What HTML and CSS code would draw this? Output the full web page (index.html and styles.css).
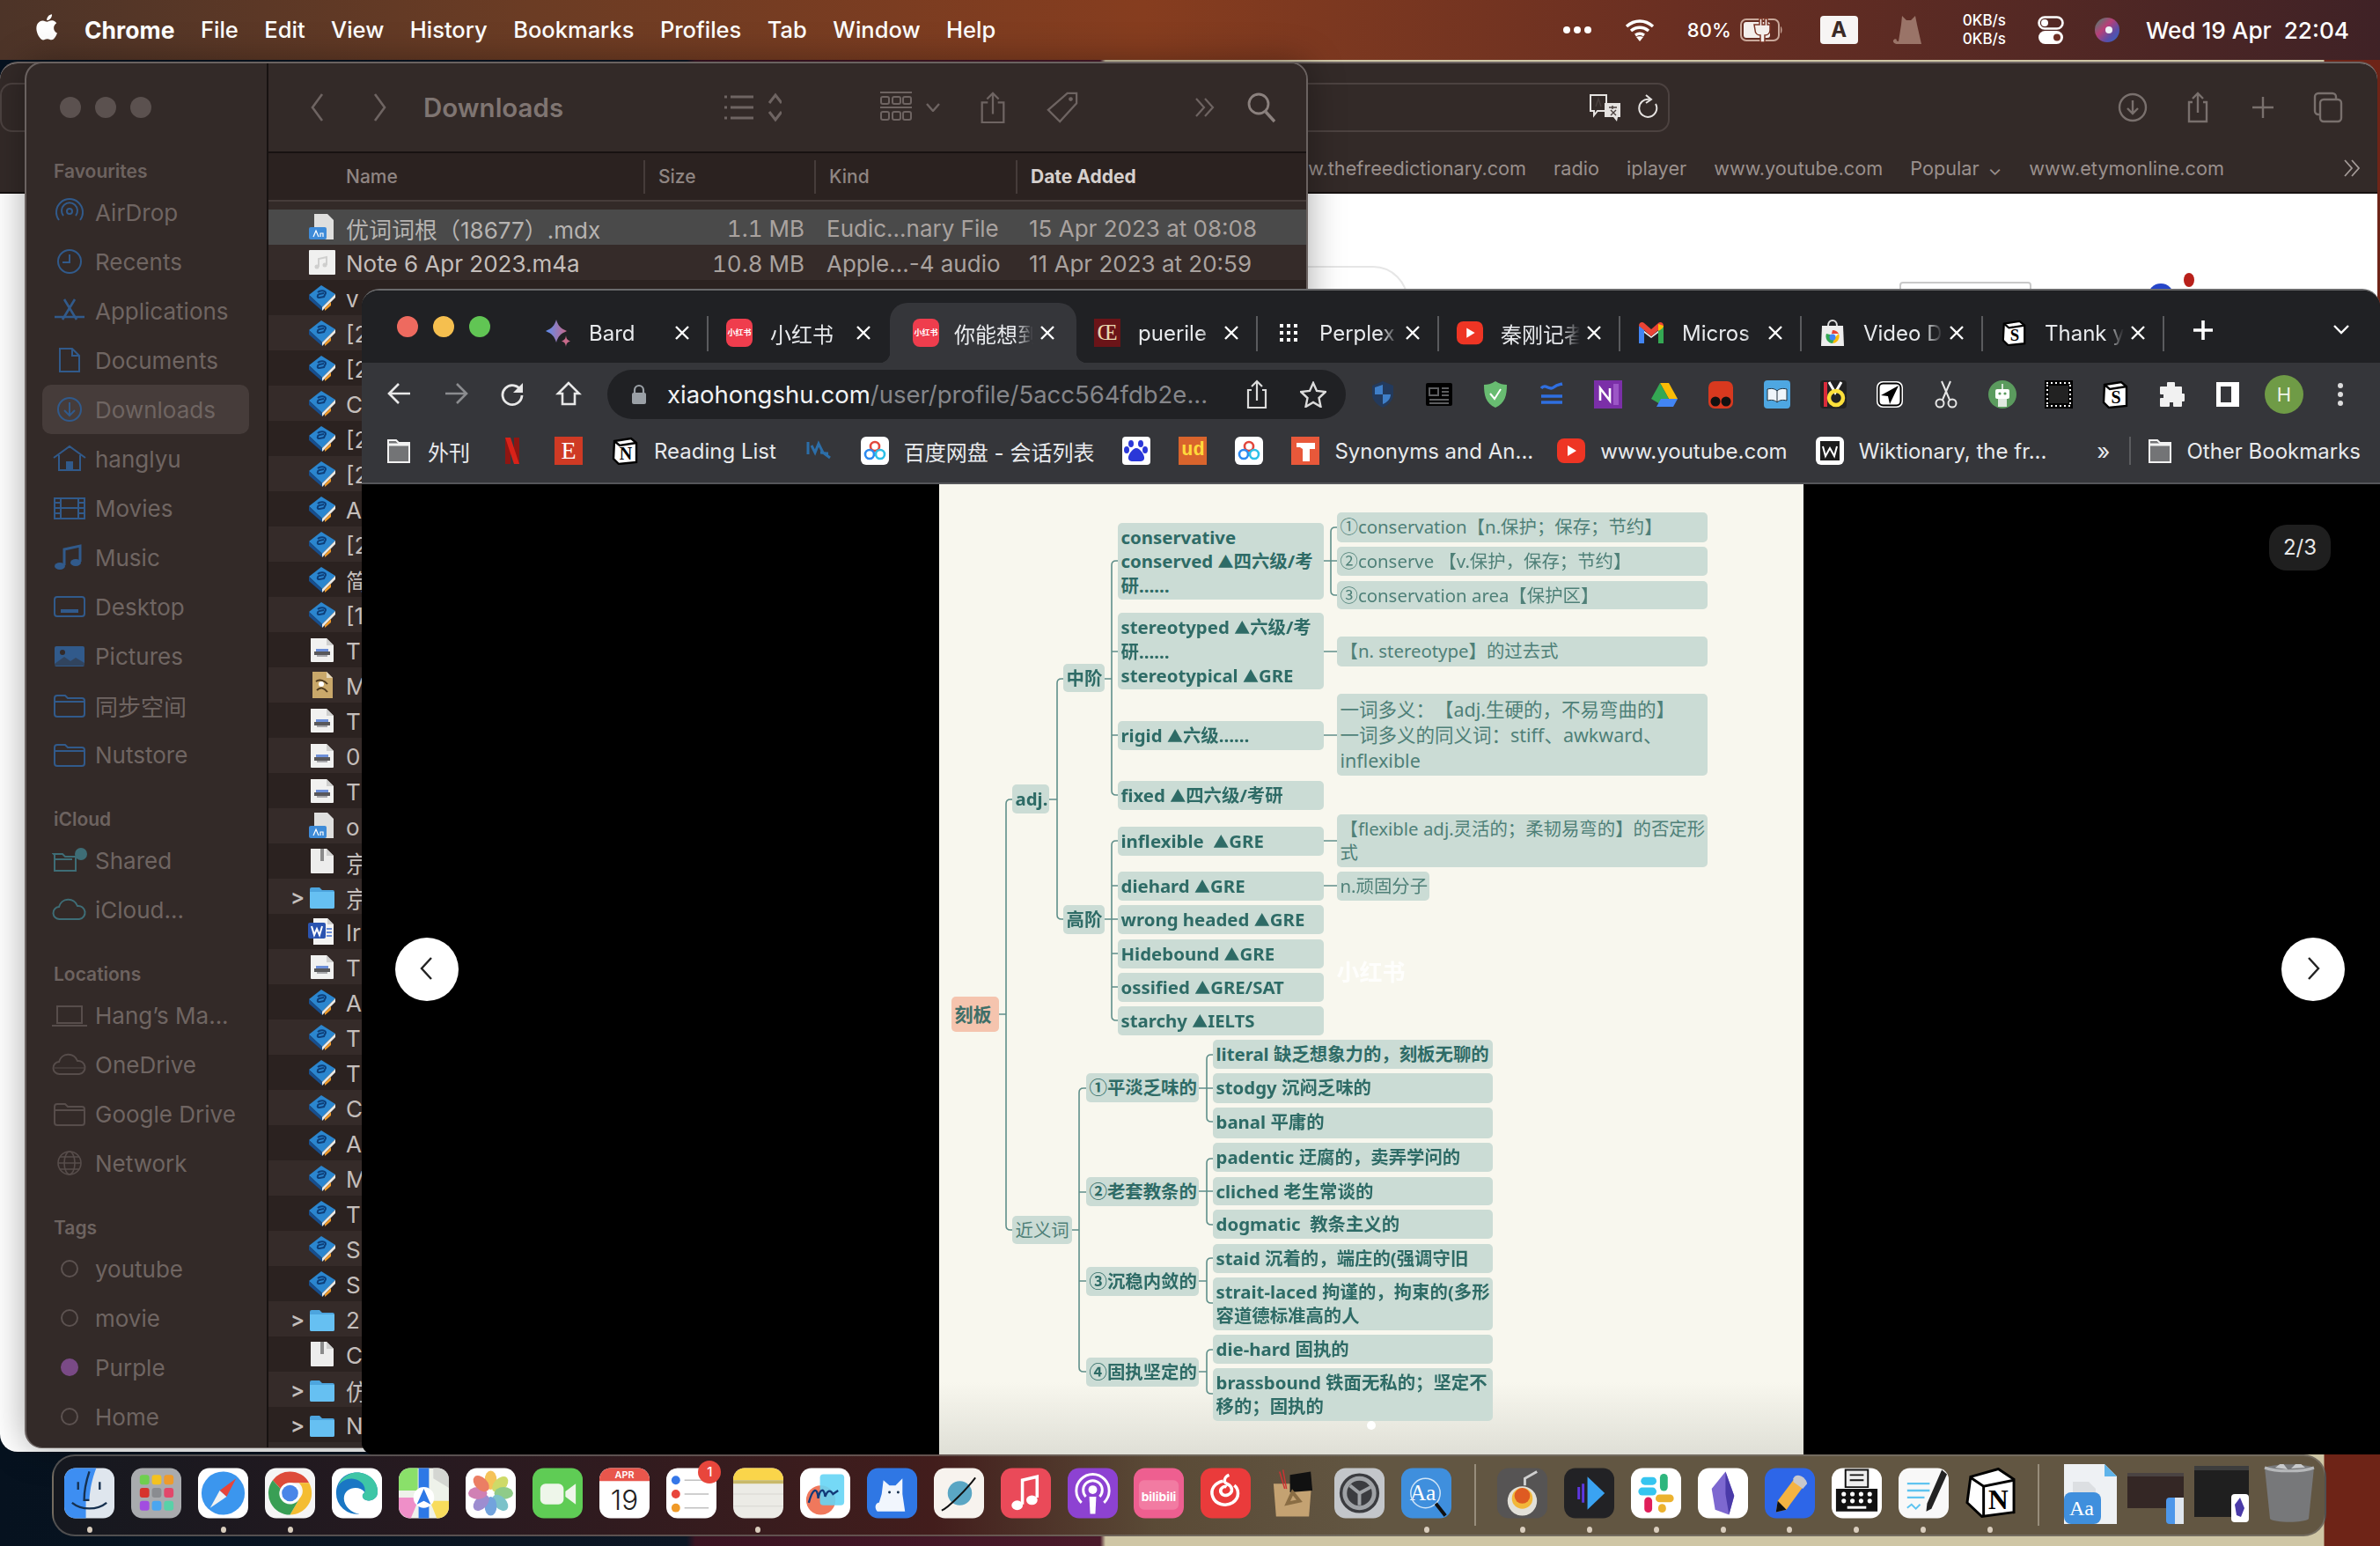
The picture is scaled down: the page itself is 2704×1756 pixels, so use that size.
FILE: index.html
```html
<!DOCTYPE html>
<html lang="en">
<head>
    <meta charset="UTF-8">
    <title>Desktop</title>
    <link rel="stylesheet" href="styles.css">
</head>
<body>
<svg class="defs" width="0" height="0">
    <symbol id="i-book" viewBox="0 0 32 32">
        <path d="M1 13 15 2l16 10-15 15z" fill="#2b86cf"/>
        <path d="M1 13l15 14v4L1 18z" fill="#174f8f"/>
        <path d="M16 27l15-15v4L16 31z" fill="#e9e9e6"/>
        <path d="M19 28l7-7v4l-7 6z" fill="#ef9a2a"/>
        <path d="M11 10c3-3 9-2 9 1l-2 4-5 1c-3 0-3-3 0-4l5-1" fill="none" stroke="#0d3f7a" stroke-width="2"/>
    </symbol>
    <symbol id="i-doc" viewBox="0 0 32 32">
        <path d="M3 3h18l8 8v18a1 1 0 0 1-1 1H4a1 1 0 0 1-1-1z" fill="#f1f1f0"/>
        <path d="M21 3l8 8h-8z" fill="#cfcfce"/>
        <path d="M9 15h14v3H9z" fill="#6d8fd8"/><path d="M7 18h18v4H7z" fill="#59585a"/><path d="M10 22h12v2H10z" fill="#a8a8ab"/>
    </symbol>
    <symbol id="i-zip" viewBox="0 0 32 32">
        <path d="M3 2h18l8 8v19a1 1 0 0 1-1 1H4a1 1 0 0 1-1-1z" fill="#ededec"/>
        <path d="M21 2l8 8h-8z" fill="#cfcfce"/>
        <path d="M14 2h4v14h-4z" fill="#8b8b8b"/>
    </symbol>
    <symbol id="i-audio" viewBox="0 0 32 32">
        <rect x="1" y="2" width="30" height="28" rx="1" fill="#f0f0ef"/>
        <path d="M12 21v-9l9-2v9" fill="none" stroke="#cfcfce" stroke-width="2"/><circle cx="10" cy="21" r="2.500" fill="#cfcfce"/><circle cx="19" cy="19" r="2.500" fill="#cfcfce"/>
    </symbol>
    <symbol id="i-scroll" viewBox="0 0 32 32">
        <path d="M5 1h16l7 7v23H5z" fill="#c9a86a"/><path d="M21 1l7 7h-7z" fill="#e6d9bd"/>
        <path d="M9 12c4-3 10-1 13 3M10 22c4-4 8-3 12 2" fill="none" stroke="#4e3a1e" stroke-width="2"/><circle cx="15" cy="15" r="3" fill="#fff"/>
    </symbol>
    <symbol id="i-word" viewBox="0 0 32 32">
        <path d="M6 1h16l7 7v23H6z" fill="#f4f4f3"/><path d="M22 1l7 7h-7z" fill="#cfcfce"/>
        <rect y="6" width="20" height="18" rx="2" fill="#2b54b0"/><path d="M4 10l3 10 3-7 3 7 3-10" fill="none" stroke="#fff" stroke-width="2"/>
        <path d="M21 13h6M21 17h6M21 21h6" stroke="#3b6bd0" stroke-width="1.500"/>
    </symbol>
    <symbol id="i-dict" viewBox="0 0 32 32">
        <path d="M7 1h15l7 7v22H7z" fill="#dfdfde"/>
        <rect x="1" y="16" width="20" height="14" rx="2" fill="#3e8bd8"/>
        <path d="M6 27l3-7 3 7M14 27v-4h3v4" fill="none" stroke="#fff" stroke-width="1.2"/>
    </symbol>
    <symbol id="i-folder" viewBox="0 0 32 32">
        <path d="M2 8a2 2 0 0 1 2-2h9l3 3h12a2 2 0 0 1 2 2v17a2 2 0 0 1-2 2H4a2 2 0 0 1-2-2z" fill="#4da5de"/>
        <path d="M2 11h28v17a2 2 0 0 1-2 2H4a2 2 0 0 1-2-2z" fill="#66c0f2"/>
    </symbol>
    <symbol id="i-x" viewBox="0 0 20 20">
        <path d="M3 3l14 14M17 3L3 17" fill="none" stroke="#fff" stroke-width="2.4"/>
    </symbol>
    <symbol id="i-bmfolder" viewBox="0 0 26 30">
        <path d="M1 3h9l3 3h12v22H1z" fill="#737476" stroke="#f2f2f2" stroke-width="2"/>
        <path d="M1 8h24" stroke="#f2f2f2" stroke-width="3"/>
    </symbol>
    <symbol id="i-sidefolder" viewBox="0 0 40 32">
        <path d="M3 8a3 3 0 0 1 3-3h9l3 3h16a3 3 0 0 1 3 3v15a3 3 0 0 1-3 3H6a3 3 0 0 1-3-3zM3 12h34" fill="none" stroke="currentColor" stroke-width="2"/>
    </symbol>
    <symbol id="i-yt" viewBox="0 0 32 32">
        <rect y="2" width="32" height="28" rx="8" fill="#ee3524"/><path d="M12 10l10 6-10 6z" fill="#fff"/>
    </symbol>
    <symbol id="i-baidu" viewBox="0 0 32 32">
        <rect width="32" height="32" rx="6" fill="#fff"/>
        <circle cx="16" cy="11" r="5" fill="none" stroke="#e2483d" stroke-width="2.6"/>
        <circle cx="10" cy="20" r="5" fill="none" stroke="#2c8af0" stroke-width="2.6"/>
        <circle cx="22" cy="20" r="5" fill="none" stroke="#2cc0e8" stroke-width="2.6"/>
    </symbol>
    <symbol id="i-notion" viewBox="0 0 32 32">
        <path d="M4 5l19-3 6 5v22l-20 2-6-6z" fill="#fff" stroke="#000" stroke-width="2.4"/>
        <path d="M4 5l6 5 19-3" fill="none" stroke="#000" stroke-width="2.4"/>
    </symbol>
</svg>

<header class="menubar">
    <svg class="apple" viewBox="0 0 24 24"><path fill="#fff" d="M17.05 12.54c-.03-2.6 2.12-3.85 2.22-3.91-1.21-1.77-3.09-2.01-3.76-2.04-1.6-.16-3.12.94-3.93.94-.81 0-2.06-.92-3.39-.89-1.74.03-3.35 1.01-4.25 2.57-1.81 3.14-.46 7.8 1.3 10.35.86 1.25 1.89 2.65 3.23 2.6 1.3-.05 1.79-.84 3.36-.84 1.57 0 2.01.84 3.38.81 1.4-.02 2.28-1.27 3.13-2.53.99-1.45 1.39-2.85 1.42-2.93-.03-.01-2.71-1.04-2.74-4.13zM14.47 4.9c.72-.87 1.2-2.08 1.07-3.28-1.03.04-2.28.69-3.02 1.55-.66.77-1.24 2-1.09 3.18 1.15.09 2.32-.58 3.04-1.45z"/></svg>
    <nav class="menu">
        <b>Chrome</b><span>File</span><span>Edit</span><span>View</span><span>History</span><span>Bookmarks</span><span>Profiles</span><span>Tab</span><span>Window</span><span>Help</span>
    </nav>
    <div class="status">
        <svg class="st-dots" viewBox="0 0 34 10"><circle cx="5" cy="5" r="4" fill="#fff"/><circle cx="17" cy="5" r="4" fill="#fff"/><circle cx="29" cy="5" r="4" fill="#fff"/></svg>
        <svg class="st-wifi" viewBox="0 0 34 26"><path d="M2 9c9-8 21-8 30 0M7 14c6-5 14-5 20 0M12 19c3-2 7-2 10 0" fill="none" stroke="#fff" stroke-width="3.4"/><path d="M17 26l-4-5c2-1 6-1 8 0z" fill="#fff"/></svg>
        <span class="st-pct">80%</span>
        <svg class="st-batt" viewBox="0 0 50 28"><rect x="1" y="2" width="43" height="24" rx="6" fill="none" stroke="#c9a89a" stroke-width="2"/><path d="M46 10c2 1 2 7 0 8z" fill="#c9a89a"/><rect x="4" y="5" width="30" height="18" rx="3" fill="#f4efec"/><path d="M16 8h6V1h3v7h3V1h3v7h3v6c0 4-3 6-6 6v8h-5v-8c-3 0-6-2-6-6z" fill="#f4efec" stroke="#7a3424" stroke-width="1.500"/></svg>
        <span class="st-input">A</span>
        <svg class="st-cat" viewBox="0 0 34 32"><path d="M9 32c-4 1-9-1-8-4 1-2 3-2 4-1-1 1 0 2 2 2l3-19L11 0l5 5h5l5-5 2 10 5 22z" fill="#9a7468"/></svg>
        <span class="st-speed">0KB/s<br>0KB/s</span>
        <svg class="st-toggle" viewBox="0 0 30 32"><rect x="1.5" y="1.5" width="27" height="13" rx="6.5" fill="none" stroke="#fff" stroke-width="2.6"/><circle cx="8" cy="8" r="4" fill="#fff"/><rect x="1" y="17" width="28" height="15" rx="7.5" fill="#fff"/><circle cx="22" cy="24.500" r="4" fill="#6e2e24"/></svg>
        <svg class="st-siri" viewBox="0 0 28 28"><defs><linearGradient id="siri" x1="0" x2="1" y1="0" y2="1"><stop offset="0" stop-color="#3c8a6e"/><stop offset=".4" stop-color="#b83f78"/><stop offset=".7" stop-color="#5a4ea8"/><stop offset="1" stop-color="#2a66c8"/></linearGradient></defs><circle cx="14" cy="14" r="14" fill="url(#siri)"/><circle cx="16" cy="14" r="4" fill="#eef0f6"/></svg>
        <span class="st-time">Wed 19 Apr&nbsp; 22:04</span>
    </div>
</header>

<section class="window safari">
    <div class="sf-toolbar">
        <div class="sf-url">
            <svg class="sf-translate" viewBox="0 0 40 34"><path d="M3 3h18v18H11l-4 5v-5H3z" fill="none" stroke="#e5e2e0" stroke-width="2"/><path d="M19 12h18v16h-3l-1 5-4-5h-10z" fill="#e5e2e0"/><path d="M9 16l3-9 3 9M24 17h9M28 15v4M26 26l6-6M26 20l6 6" fill="none" stroke="#4a403e" stroke-width="1.4"/></svg>
            <svg class="sf-reload" viewBox="0 0 24 30"><path d="M14 6a10 10 0 1 0 7 5" fill="none" stroke="#e5e2e0" stroke-width="2"/><path d="M10 1l6 5-6 4" fill="none" stroke="#e5e2e0" stroke-width="2"/></svg>
        </div>
        <div class="sf-tools">
            <svg viewBox="0 0 36 36"><circle cx="18" cy="18" r="15" fill="none" stroke="#79706d" stroke-width="2.4"/><path d="M18 10v15M12 19l6 6 6-6" fill="none" stroke="#79706d" stroke-width="2.4"/></svg>
            <svg viewBox="0 0 36 36"><path d="M12 12H8v22h20V12h-4M18 24V2M12 8l6-6 6 6" fill="none" stroke="#79706d" stroke-width="2.4"/></svg>
            <svg viewBox="0 0 36 36"><path d="M18 6v24M6 18h24" fill="none" stroke="#79706d" stroke-width="2.4"/></svg>
            <svg viewBox="0 0 36 36"><rect x="3" y="2" width="24" height="24" rx="4" fill="none" stroke="#79706d" stroke-width="2.4"/><rect x="9" y="9" width="24" height="25" rx="4" fill="#332a28" stroke="#79706d" stroke-width="2.4"/></svg>
        </div>
    </div>
    <div class="sf-favs">
        <span>www.thefreedictionary.com</span><span>radio</span><span>iplayer</span><span>www.youtube.com</span><span>Popular <small>&#8964;</small></span><span>www.etymonline.com</span>
        <svg class="sf-more" viewBox="0 0 24 24"><path d="M4 3l8 9-8 9M12 3l8 9-8 9" fill="none" stroke="#a39a97" stroke-width="1.8"/></svg>
    </div>
    <div class="sf-page">
        <div class="sf-search"></div>
        <div class="sf-chip"></div>
        <div class="sf-logo"><i></i><i></i></div>
    </div>
</section>

<section class="window finder">
    <aside class="side">
        <h4>Favourites</h4>
        <div class="side-item"><svg viewBox="0 0 40 32"><g fill="none" stroke="currentColor" stroke-width="2"><circle cx="20" cy="15" r="3"/><path d="M13 20a9 9 0 1 1 14 0M8 25a15 15 0 1 1 24 0"/></g></svg>AirDrop</div>
        <div class="side-item"><svg viewBox="0 0 40 32"><circle cx="20" cy="16" r="13" fill="none" stroke="currentColor" stroke-width="2"/><path d="M20 8v9h-8" fill="none" stroke="currentColor" stroke-width="2"/></svg>Recents</div>
        <div class="side-item"><svg viewBox="0 0 40 32"><path d="M14 3l14 23M26 3L12 26M3 23h34" fill="none" stroke="currentColor" stroke-width="2.6"/></svg>Applications</div>
        <div class="side-item"><svg viewBox="0 0 40 32"><path d="M9 3h14l8 8v18H9zM23 3v8h8" fill="none" stroke="currentColor" stroke-width="2"/></svg>Documents</div>
        <div class="side-item side-on"><svg viewBox="0 0 40 32"><circle cx="20" cy="16" r="13" fill="none" stroke="currentColor" stroke-width="2"/><path d="M20 8v15M14 17l6 6 6-6" fill="none" stroke="currentColor" stroke-width="2"/></svg>Downloads</div>
        <div class="side-item"><svg viewBox="0 0 40 32"><path d="M2 15L20 2l18 13M8 12v17h24V12" fill="none" stroke="currentColor" stroke-width="2"/><rect x="16" y="19" width="8" height="10" fill="currentColor"/></svg>hanglyu</div>
        <div class="side-item"><svg viewBox="0 0 40 32"><path d="M3 5h34v23H3zM10 5v23M30 5v23M10 16h20M3 10h7M3 16h7M3 22h7M30 10h7M30 16h7M30 22h7" fill="none" stroke="currentColor" stroke-width="2"/></svg>Movies</div>
        <div class="side-item"><svg viewBox="0 0 40 32"><path d="M14 25V7l18-4v18" fill="none" stroke="currentColor" stroke-width="3"/><ellipse cx="9" cy="26" rx="6" ry="4" fill="currentColor"/><ellipse cx="27" cy="22" rx="6" ry="4" fill="currentColor"/></svg>Music</div>
        <div class="side-item"><svg viewBox="0 0 40 32"><rect x="3" y="5" width="34" height="22" rx="3" fill="none" stroke="currentColor" stroke-width="2"/><rect x="10" y="19" width="20" height="4" fill="currentColor"/></svg>Desktop</div>
        <div class="side-item"><svg viewBox="0 0 40 32"><rect x="3" y="5" width="34" height="23" rx="2" fill="currentColor"/><circle cx="12" cy="12" r="3" fill="#332a28"/><path d="M3 25l11-8 7 5 6-4 10 6v3H3z" fill="#332a28" opacity=".45"/></svg>Pictures</div>
        <div class="side-item"><svg viewBox="0 0 40 32"><use href="#i-sidefolder"/></svg>同步空间</div>
        <div class="side-item"><svg viewBox="0 0 40 32"><use href="#i-sidefolder"/></svg>Nutstore</div>
        <h4>iCloud</h4>
        <div class="side-item side-cloud"><svg viewBox="0 0 40 32"><path d="M2 9h10l3 3h12v16H3V10zM3 15h20" fill="none" stroke="currentColor" stroke-width="2"/><circle cx="33" cy="9" r="7" fill="currentColor"/></svg>Shared</div>
        <div class="side-item side-cloud"><svg viewBox="0 0 40 32"><path d="M9 27a7 7 0 0 1-1-14 11 11 0 0 1 21-1 7.500 7.500 0 0 1 2 15z" fill="none" stroke="currentColor" stroke-width="2"/></svg>iCloud...</div>
        <h4>Locations</h4>
        <div class="side-item side-grey"><svg viewBox="0 0 40 32"><path d="M6 6h28v19H6zM0 28h40" fill="none" stroke="currentColor" stroke-width="2"/></svg>Hang’s Ma...</div>
        <div class="side-item side-grey"><svg viewBox="0 0 40 32"><path d="M9 27a7 7 0 0 1-1-14 11 11 0 0 1 21-1 7.500 7.500 0 0 1 2 15z" fill="none" stroke="currentColor" stroke-width="2"/><path d="M3 20h34" stroke="currentColor"/></svg>OneDrive</div>
        <div class="side-item side-grey"><svg viewBox="0 0 40 32"><use href="#i-sidefolder"/></svg>Google Drive</div>
        <div class="side-item side-grey"><svg viewBox="0 0 40 32"><g fill="none" stroke="currentColor" stroke-width="1.6"><circle cx="20" cy="16" r="13"/><ellipse cx="20" cy="16" rx="6" ry="13"/><path d="M7 16h26M9 9h22M9 23h22"/></g></svg>Network</div>
        <h4>Tags</h4>
        <div class="side-item side-grey"><i class="tag"></i>youtube</div>
        <div class="side-item side-grey"><i class="tag"></i>movie</div>
        <div class="side-item side-grey"><i class="tag tag-purple"></i>Purple</div>
        <div class="side-item side-grey"><i class="tag"></i>Home</div>
    </aside>
    <div class="fmain">
        <div class="ftools">
            <svg class="ft-back" viewBox="0 0 16 36"><path d="M14 3L3 18l11 15" fill="none" stroke="#6e6462" stroke-width="2.6"/></svg>
            <svg class="ft-fwd" viewBox="0 0 16 36"><path d="M2 3l11 15L2 33" fill="none" stroke="#6e6462" stroke-width="2.6"/></svg>
            <span class="ft-title">Downloads</span>
            <svg class="ft-list" viewBox="0 0 66 36"><g stroke="#6e6462" stroke-width="3" fill="none"><path d="M8 6h26M8 18h26M8 30h26M1 6h3M1 18h3M1 30h3M52 13l7-9 7 9M52 23l7 9 7-9"/></g></svg>
            <svg class="ft-grid" viewBox="0 0 36 36"><g fill="none" stroke="#6e6462" stroke-width="2"><path d="M0 1h36M0 18h36"/><rect x="1" y="6" width="9" height="8" rx="2"/><rect x="14" y="6" width="9" height="8" rx="2"/><rect x="26" y="6" width="9" height="8" rx="2"/><rect x="1" y="23" width="9" height="9" rx="2"/><rect x="14" y="23" width="9" height="9" rx="2"/><rect x="26" y="23" width="9" height="9" rx="2"/></g></svg>
            <svg class="ft-chev" viewBox="0 0 16 10"><path d="M1 1l7 8 7-8" fill="none" stroke="#6e6462" stroke-width="2.4"/></svg>
            <svg class="ft-share" viewBox="0 0 30 38"><path d="M9 13H2v24h26V13h-7M15 27V2M8 9l7-7 7 7" fill="none" stroke="#6e6462" stroke-width="2.4"/></svg>
            <svg class="ft-tag" viewBox="0 0 38 38"><path d="M25 2h11v12L16 36 2 22z" fill="none" stroke="#6e6462" stroke-width="2.4"/><circle cx="29" cy="9" r="2.500" fill="#6e6462"/></svg>
            <svg class="ft-more" viewBox="0 0 26 24"><path d="M3 2l9 10-9 10M13 2l9 10-9 10" fill="none" stroke="#6e6462" stroke-width="2.2"/></svg>
            <svg class="ft-search" viewBox="0 0 34 36"><circle cx="14" cy="14" r="11" fill="none" stroke="#8b817e" stroke-width="2.8"/><path d="M22 23l10 11" stroke="#8b817e" stroke-width="3.400"/></svg>
        </div>
        <div class="fhead">
            <span class="fh-name">Name</span><span class="fh-size">Size</span><span class="fh-kind">Kind</span><span class="fh-date">Date Added</span>
        </div>
        <div class="frows">
            <div class="row row-sel"><i></i><svg><use href="#i-dict"/></svg><span>优词词根（18677）.mdx</span><span class="r-size">1.1 MB</span><span class="r-kind">Eudic...nary File</span><span class="r-date">15 Apr 2023 at 08:08</span></div>
            <div class="row"><i></i><svg><use href="#i-audio"/></svg><span>Note 6 Apr 2023.m4a</span><span class="r-size">10.8 MB</span><span class="r-kind">Apple...-4 audio</span><span class="r-date">11 Apr 2023 at 20:59</span></div>
            <div class="row"><i></i><svg><use href="#i-book"/></svg><span>v</span></div>
            <div class="row"><i></i><svg><use href="#i-book"/></svg><span>[2</span></div>
            <div class="row"><i></i><svg><use href="#i-book"/></svg><span>[2</span></div>
            <div class="row"><i></i><svg><use href="#i-book"/></svg><span>C</span></div>
            <div class="row"><i></i><svg><use href="#i-book"/></svg><span>[2</span></div>
            <div class="row"><i></i><svg><use href="#i-book"/></svg><span>[2</span></div>
            <div class="row"><i></i><svg><use href="#i-book"/></svg><span>A</span></div>
            <div class="row"><i></i><svg><use href="#i-book"/></svg><span>[2</span></div>
            <div class="row"><i></i><svg><use href="#i-book"/></svg><span>简</span></div>
            <div class="row"><i></i><svg><use href="#i-book"/></svg><span>[1</span></div>
            <div class="row"><i></i><svg><use href="#i-doc"/></svg><span>T</span></div>
            <div class="row"><i></i><svg><use href="#i-scroll"/></svg><span>M</span></div>
            <div class="row"><i></i><svg><use href="#i-doc"/></svg><span>T</span></div>
            <div class="row"><i></i><svg><use href="#i-doc"/></svg><span>0</span></div>
            <div class="row"><i></i><svg><use href="#i-doc"/></svg><span>T</span></div>
            <div class="row"><i></i><svg><use href="#i-dict"/></svg><span>o</span></div>
            <div class="row"><i></i><svg><use href="#i-zip"/></svg><span>京</span></div>
            <div class="row"><i class="disc">&gt;</i><svg><use href="#i-folder"/></svg><span>京</span></div>
            <div class="row"><i></i><svg><use href="#i-word"/></svg><span>Ir</span></div>
            <div class="row"><i></i><svg><use href="#i-doc"/></svg><span>T</span></div>
            <div class="row"><i></i><svg><use href="#i-book"/></svg><span>A</span></div>
            <div class="row"><i></i><svg><use href="#i-book"/></svg><span>T</span></div>
            <div class="row"><i></i><svg><use href="#i-book"/></svg><span>T</span></div>
            <div class="row"><i></i><svg><use href="#i-book"/></svg><span>C</span></div>
            <div class="row"><i></i><svg><use href="#i-book"/></svg><span>A</span></div>
            <div class="row"><i></i><svg><use href="#i-book"/></svg><span>M</span></div>
            <div class="row"><i></i><svg><use href="#i-book"/></svg><span>T</span></div>
            <div class="row"><i></i><svg><use href="#i-book"/></svg><span>S</span></div>
            <div class="row"><i></i><svg><use href="#i-book"/></svg><span>S</span></div>
            <div class="row"><i class="disc">&gt;</i><svg><use href="#i-folder"/></svg><span>2</span></div>
            <div class="row"><i></i><svg><use href="#i-zip"/></svg><span>C</span></div>
            <div class="row"><i class="disc">&gt;</i><svg><use href="#i-folder"/></svg><span>仿</span></div>
            <div class="row"><i class="disc">&gt;</i><svg><use href="#i-folder"/></svg><span>N</span></div>
        </div>
    </div>
    <div class="lights-grey"><i></i><i></i><i></i></div>
</section>

<section class="window chrome">
    <div class="tabstrip">
        <div class="lights"><i class="red"></i><i class="yellow"></i><i class="green"></i></div>
        <div class="tab">
            <svg class="tab-icon" viewBox="0 0 30 32"><defs><linearGradient id="bard" x1="0" x2="1"><stop offset="0" stop-color="#5b8df0"/><stop offset="1" stop-color="#c86a8a"/></linearGradient></defs><path d="M13 1C15 8 18 11 25 14 18 17 15 20 13 27 11 20 8 17 1 14 8 11 11 8 13 1Z" fill="url(#bard)"/><path d="M24 19c.5 4 1.500 5 5 6.500-3.500 1-4.500 2.500-5 6.500-.5-4-1.500-5.500-5-6.500 3.500-1.500 4.500-2.500 5-6.500z" fill="#c86a8a"/></svg>
            <span class="tab-title">Bard</span><svg class="tab-x"><use href="#i-x"/></svg>
        </div>
        <div class="tab tab-nosep">
            <span class="tab-xhs">小红书</span>
            <span class="tab-title">小红书</span><svg class="tab-x"><use href="#i-x"/></svg>
        </div>
        <div class="tab tab-on">
            <span class="tab-xhs">小红书</span>
            <span class="tab-title">你能想到</span><svg class="tab-x"><use href="#i-x"/></svg>
        </div>
        <div class="tab">
            <span class="tab-oe">Œ</span>
            <span class="tab-title">puerile</span><svg class="tab-x"><use href="#i-x"/></svg>
        </div>
        <div class="tab">
            <svg class="tab-icon" viewBox="0 0 30 30"><g fill="#fff"><rect x="5" y="5" width="4" height="4"/><rect x="13" y="5" width="4" height="4"/><rect x="21" y="5" width="4" height="4"/><rect x="5" y="13" width="4" height="4"/><rect x="13" y="13" width="4" height="4"/><rect x="21" y="13" width="4" height="4"/><rect x="5" y="21" width="4" height="4"/><rect x="13" y="21" width="4" height="4"/><rect x="21" y="21" width="4" height="4"/></g></svg>
            <span class="tab-title">Perplex</span><svg class="tab-x"><use href="#i-x"/></svg>
        </div>
        <div class="tab">
            <svg class="tab-icon"><use href="#i-yt"/></svg>
            <span class="tab-title">秦刚记者</span><svg class="tab-x"><use href="#i-x"/></svg>
        </div>
        <div class="tab">
            <svg class="tab-icon" viewBox="0 0 30 30"><path d="M1 8l14 11L29 8v19h-6V15l-8 6-8-6v12H1z" fill="#e9eaec"/><path d="M1 27V7l6 4v16z" fill="#4285f4"/><path d="M23 27V11l6-4v20z" fill="#34a853"/><path d="M1 7c0-4 4-5 6-3l8 7 8-7c2-2 6-1 6 3l-6 5-8 7-8-7z" fill="#ea4335"/><path d="M23 5l6 2c0 2-2 4-6 6z" fill="#fbbc05"/></svg>
            <span class="tab-title">Micros</span><svg class="tab-x"><use href="#i-x"/></svg>
        </div>
        <div class="tab">
            <svg class="tab-icon" viewBox="0 0 30 32"><path d="M3 8h24l1 23H2z" fill="#eee"/><path d="M10 8c0-8 10-8 10 0" fill="none" stroke="#ddd" stroke-width="2"/><path d="M15 13a8 8 0 0 1 7 4H14z" fill="#ea4335"/><path d="M22 17a8 8 0 0 1-7 11l3-7z" fill="#fbbc05"/><path d="M8 17a8 8 0 0 0 7 11l3-7-6-3z" fill="#34a853"/><circle cx="15" cy="21" r="3.500" fill="#4285f4"/></svg>
            <span class="tab-title">Video D</span><svg class="tab-x"><use href="#i-x"/></svg>
        </div>
        <div class="tab">
            <svg class="tab-icon" viewBox="0 0 32 32"><use href="#i-notion"/><text class="ic-letter" x="17" y="26">S</text></svg>
            <span class="tab-title">Thank y</span><svg class="tab-x"><use href="#i-x"/></svg>
        </div>
        <svg class="tab-new" viewBox="0 0 26 26"><path d="M13 2v22M2 13h22" stroke="#fff" stroke-width="3.600"/></svg>
        <svg class="tab-list" viewBox="0 0 20 12"><path d="M2 2l8 8 8-8" fill="none" stroke="#fff" stroke-width="2.400"/></svg>
    </div>
    <div class="toolbar">
        <button class="tb"><svg viewBox="0 0 30 30"><path d="M27 15H4M14 4L3 15l11 11" fill="none" stroke="#e8e8e8" stroke-width="2.600"/></svg></button>
        <button class="tb"><svg viewBox="0 0 30 30"><path d="M3 15h23M16 4l11 11-11 11" fill="none" stroke="#8b8c8f" stroke-width="2.600"/></svg></button>
        <button class="tb"><svg viewBox="0 0 30 30"><path d="M25 12a11 11 0 1 0 1 5" fill="none" stroke="#e8e8e8" stroke-width="2.800"/><path d="M27 3v11H16z" fill="#e8e8e8"/></svg></button>
        <button class="tb"><svg viewBox="0 0 30 30"><path d="M15 3L3 15h5v12h14V15h5z" fill="none" stroke="#e8e8e8" stroke-width="2.600"/></svg></button>
        <div class="omni">
            <svg class="omni-lock" viewBox="0 0 18 24"><rect x="1" y="10" width="16" height="13" rx="2" fill="#9aa0a6"/><path d="M4 11V7a5 5 0 0 1 10 0v4" fill="none" stroke="#9aa0a6" stroke-width="2.200"/></svg>
            <span class="omni-url"><b>xiaohongshu.com</b>/user/profile/5acc564fdb2e...</span>
            <svg class="omni-share" viewBox="0 0 26 34"><path d="M7 12H3v20h20V12h-4M13 24V2M7 8l6-6 6 6" fill="none" stroke="#dcdcdc" stroke-width="2.200"/></svg>
            <svg class="omni-star" viewBox="0 0 30 30"><path d="M15 2l4 9 10 1-7.500 7 2 10-8.500-5-8.500 5 2-10L1 12l10-1z" fill="none" stroke="#dcdcdc" stroke-width="2.400"/></svg>
        </div>
        <div class="exts">
            <svg viewBox="0 0 32 32"><path d="M16 1l12 5v10c0 7-6 12-12 15C10 28 4 23 4 16V6z" fill="#233a5c"/><path d="M16 5v11H7V8zM16 16h9c0 5-4 9-9 11z" fill="#3f7fc8"/></svg>
            <svg viewBox="0 0 32 32"><rect x="1" y="3" width="30" height="26" rx="2" fill="#000"/><g fill="none" stroke="#5d5e60" stroke-width="2"><path d="M5 9h10v8H5zM19 9h8M19 13h8M19 17h8M5 22h22M5 26h22"/></g></svg>
            <svg viewBox="0 0 32 32"><path d="M16 1c5 3 9 4 13 4 0 12-2 21-13 26C5 26 3 17 3 5c4 0 8-1 13-4z" fill="#68bc71"/><path d="M10 15l5 6 7-11" fill="none" stroke="#fff" stroke-width="2"/></svg>
            <svg viewBox="0 0 32 32"><g fill="none" stroke="#2f6fe0" stroke-width="3.400"><path d="M4 9c5-6 9 3 14-1 4-3 6-3 10-4"/><path d="M4 18h24M4 25h24"/></g></svg>
            <svg viewBox="0 0 32 32"><rect width="32" height="32" fill="#7b2fa8"/><rect x="22" y="4" width="6" height="24" fill="#9c56c6"/><path d="M7 23V9l11 14V9" fill="none" stroke="#fff" stroke-width="2.600"/></svg>
            <svg viewBox="0 0 32 32"><path d="M11 3h10l10 18H21z" fill="#fbbc05"/><path d="M11 3l10 18-5 9L1 21z" fill="#34a853"/><path d="M7 30l5-9h19l-5 9z" fill="#4285f4"/></svg>
            <svg viewBox="0 0 32 32"><rect x="2" y="1" width="28" height="31" rx="7" fill="#d8391f"/><circle cx="10" cy="24" r="5.500" fill="#111"/><circle cx="22" cy="24" r="5.500" fill="#111"/></svg>
            <svg viewBox="0 0 32 32"><rect x="1" width="30" height="32" rx="4" fill="#4ea7e2"/><path d="M5 10c4-1 8-1 11 2 3-3 7-3 11-2v13c-4-1-8-1-11 2-3-3-7-3-11-2z" fill="#eef5fa" stroke="#20303c"/><path d="M16 12v13" stroke="#20303c"/></svg>
            <svg viewBox="0 0 32 32"><rect x="1" width="30" height="32" rx="4" fill="#222"/><path d="M5 2h4v28H5z" fill="#d92b3a"/><path d="M11 2l7 12 7-12" fill="none" stroke="#fff" stroke-width="3"/><circle cx="19" cy="20" r="8" fill="none" stroke="#ffe13b" stroke-width="4.500"/></svg>
            <svg viewBox="0 0 32 32"><rect x="1" y="1" width="30" height="30" rx="7" fill="#fff"/><rect x="3.500" y="3.500" width="25" height="25" rx="5" fill="none" stroke="#000" stroke-width="2"/><path d="M26 6L6 17l8 1 2 9z" fill="#000"/></svg>
            <svg viewBox="0 0 32 32"><g fill="none" stroke="#e6e6e6" stroke-width="2"><path d="M11 1l9 21M21 1l-9 21"/><circle cx="9" cy="26" r="4.500"/><circle cx="23" cy="26" r="4.500"/></g></svg>
            <svg viewBox="0 0 32 32"><circle cx="16" cy="16" r="16" fill="#5b9b5e"/><rect x="8" y="10" width="16" height="11" rx="2" fill="#fff"/><rect x="11" y="21" width="10" height="9" fill="#dfe8df"/><circle cx="13" cy="15" r="1.600" fill="#5b9b5e"/><circle cx="19" cy="15" r="1.600" fill="#5b9b5e"/><path d="M16 10V4" stroke="#fff" stroke-width="1.500"/></svg>
            <svg viewBox="0 0 32 32"><rect width="32" height="32" fill="#000"/><rect x="5" y="6" width="22" height="20" fill="#222"/><path d="M2 3h28M2 29h28M3 5v22M29 5v22" stroke="#fff" stroke-width="2" stroke-dasharray="2 3"/></svg>
            <svg viewBox="0 0 32 32"><use href="#i-notion"/><text class="ic-letter" x="17" y="26">S</text></svg>
            <svg viewBox="0 0 32 32"><path d="M12 3h7v5h8v8h3v7h-3v6h-8v-5h-6v5H4v-8h4v-6H4V8h8z" fill="#f1f1f1" stroke-linejoin="round" stroke="#f1f1f1" stroke-width="2"/></svg>
            <svg viewBox="0 0 32 32"><path d="M3 2h26v28H3z" fill="#fff"/><rect x="8" y="7" width="12" height="18" fill="#35363a"/></svg>
            <span class="avatar">H</span>
            <svg viewBox="0 0 32 32"><g fill="#dcdcdc"><circle cx="16" cy="6" r="3"/><circle cx="16" cy="16" r="3"/><circle cx="16" cy="26" r="3"/></g></svg>
        </div>
    </div>
    <div class="bmbar">
        <div class="bm bm-wide"><svg class="bm-fold"><use href="#i-bmfolder"/></svg><span>外刊</span></div>
        <div class="bm"><svg viewBox="0 0 32 32"><path d="M8 1h6v30H8zM18 1h6v30h-6z" fill="#8e1612"/><path d="M8 1h6l10 30h-6z" fill="#d82219"/></svg></div>
        <div class="bm"><span class="bm-e">E</span></div>
        <div class="bm"><svg viewBox="0 0 32 32"><use href="#i-notion"/><text class="ic-letter" x="17" y="26">N</text></svg><span>Reading List</span></div>
        <div class="bm"><svg viewBox="0 0 32 32"><path d="M4 6v14M8 10l4 8 4-10 5 10 8 6M18 18c3 0 5 1 9 1" fill="none" stroke="#2c6ea8" stroke-width="3"/></svg></div>
        <div class="bm"><svg><use href="#i-baidu"/></svg><span>百度网盘 - 会话列表</span></div>
        <div class="bm"><svg viewBox="0 0 32 32"><rect width="32" height="32" rx="4" fill="#fff"/><g fill="#2a37d8"><ellipse cx="10" cy="8" rx="3" ry="4"/><ellipse cx="21" cy="8" rx="3" ry="4"/><ellipse cx="5" cy="15" rx="3" ry="4"/><ellipse cx="26" cy="15" rx="3" ry="4"/><path d="M16 13c4 0 10 8 9 12-1 4-6 3-9 3s-8 1-9-3c-1-4 5-12 9-12z"/></g></svg></div>
        <div class="bm"><span class="bm-ud">ud</span></div>
        <div class="bm"><svg><use href="#i-baidu"/></svg></div>
        <div class="bm bm-tight"><svg viewBox="0 0 32 32"><rect width="32" height="32" fill="#e8583a"/><path d="M6 7h21v7h-6v14h-8V14l-3-2H6z" fill="#fff"/></svg><span>Synonyms and An...</span></div>
        <div class="bm"><svg><use href="#i-yt"/></svg><span>www.youtube.com</span></div>
        <div class="bm"><svg viewBox="0 0 32 32"><rect width="32" height="32" rx="6" fill="#fff"/><rect x="5" y="5" width="22" height="22" fill="#1c1c1c"/><path d="M8 11l3 11 5-9 5 9 3-11" fill="none" stroke="#fff" stroke-width="2"/></svg><span>Wiktionary, the fr...</span></div>
        <div class="bm-right">
            <span class="bm-more">»</span>
            <i class="bm-sep"></i>
            <div class="bm"><svg class="bm-fold"><use href="#i-bmfolder"/></svg><span>Other Bookmarks</span></div>
        </div>
    </div>
    <div class="stage">
        <div class="photo">
            <div class="mindmap">
                <svg class="links" viewBox="0 0 982 1102">
                    <path d="M68 602h8M83 358h-2q-5 0-5 5v479q0 5 5 5h2"/>
                    <path d="M125 358h9M141 221h-2q-5 0-5 5v263q0 5 5 5h2"/>
                    <path d="M188 221h8M203 87h-2q-5 0-5 5v256q0 5 5 5h2M196 190h7M196 285h7"/>
                    <path d="M437 87h15M452 49h-2q-5 0-5 5v67q0 5 5 5h2"/>
                    <path d="M436 190h16M436 285h16M437 405h15M437 456h15"/>
                    <path d="M188 494h8M203 405h-2q-5 0-5 5v194q0 5 5 5h2M196 456h7M196 494h7M196 533h7M196 571h7"/>
                    <path d="M151 847h8M167 686h-3q-5 0-5 5v312q0 5 5 5h3M159 804h8M159 905h8"/>
                    <path d="M295 686h16M311 648h-2q-5 0-5 5v66q0 5 5 5h2"/>
                    <path d="M295 803h16M311 766h-2q-5 0-5 5v65q0 5 5 5h2"/>
                    <path d="M295 905h9M311 879h-2q-5 0-5 5v41q0 5 5 5h2"/>
                    <path d="M295 1008h9M311 983h-2q-5 0-5 5v40q0 5 5 5h2"/>
                </svg>
                <div class="node root n-root">刻板</div>
                <div class="node n-adj b">adj.</div>
                <div class="node n-syn">近义词</div>
                <div class="node n-mid b">中阶</div>
                <div class="node n-high b">高阶</div>
                <div class="node n-l2 n-cons b">conservative<br>conserved <i class="tri">▲</i>四六级/考<br>研……</div>
                <div class="node n-l2 n-ster b">stereotyped <i class="tri">▲</i>六级/考<br>研……<br>stereotypical <i class="tri">▲</i>GRE</div>
                <div class="node n-l2 n-rigid b">rigid <i class="tri">▲</i>六级……</div>
                <div class="node n-l2 n-fixed b">fixed <i class="tri">▲</i>四六级/考研</div>
                <div class="node n-l2 n-infl b">inflexible &nbsp;<i class="tri">▲</i>GRE</div>
                <div class="node n-l2 n-die b">diehard <i class="tri">▲</i>GRE</div>
                <div class="node n-l2 n-wrong b">wrong headed <i class="tri">▲</i>GRE</div>
                <div class="node n-l2 n-hide b">Hidebound <i class="tri">▲</i>GRE</div>
                <div class="node n-l2 n-ossi b">ossified <i class="tri">▲</i>GRE/SAT</div>
                <div class="node n-l2 n-star b">starchy <i class="tri">▲</i>IELTS</div>
                <div class="node n-l3 n-c1">①conservation【n.保护；保存；节约】</div>
                <div class="node n-l3 n-c2">②conserve 【v.保护，保存；节约】</div>
                <div class="node n-l3 n-c3">③conservation area【保护区】</div>
                <div class="node n-l3 n-st">【n. stereotype】的过去式</div>
                <div class="node n-l3 n-ri">一词多义：【adj.生硬的，不易弯曲的】<br>一词多义的同义词：stiff、awkward、<br>inflexible</div>
                <div class="node n-l3 n-fl">【flexible adj.灵活的；柔韧易弯的】的否定形<br>式</div>
                <div class="node n-gu">n.顽固分子</div>
                <div class="node n-g n-g1 b">①平淡乏味的</div>
                <div class="node n-g n-g2 b">②老套教条的</div>
                <div class="node n-g n-g3 b">③沉稳内敛的</div>
                <div class="node n-g n-g4 b">④固执坚定的</div>
                <div class="node n-w n-w1 b">literal 缺乏想象力的，刻板无聊的</div>
                <div class="node n-w n-w2 b">stodgy 沉闷乏味的</div>
                <div class="node n-w n-w3 b">banal 平庸的</div>
                <div class="node n-w n-w4 b">padentic 迂腐的，卖弄学问的</div>
                <div class="node n-w n-w5 b">cliched 老生常谈的</div>
                <div class="node n-w n-w6 b">dogmatic &nbsp;教条主义的</div>
                <div class="node n-w n-w7 b">staid 沉着的，端庄的(强调守旧</div>
                <div class="node n-w n-w8 b">strait-laced 拘谨的，拘束的(多形<br>容道德标准高的人</div>
                <div class="node n-w n-w9 b">die-hard 固执的</div>
                <div class="node n-w n-w10 b">brassbound 铁面无私的；坚定不<br>移的；固执的</div>
                <div class="mark">小红书</div>
                <i class="page-dot"></i>
            </div>
        </div>
        <div class="pager">2/3</div>
        <button class="arrow arrow-prev"><svg viewBox="0 0 20 30"><path d="M15 3L4 15l11 12" fill="none" stroke="#222" stroke-width="2.400"/></svg></button>
        <button class="arrow arrow-next"><svg viewBox="0 0 20 30"><path d="M5 3l11 12L5 27" fill="none" stroke="#222" stroke-width="2.400"/></svg></button>
    </div>
</section>

<footer class="dock">
    <div class="dk run"><svg viewBox="0 0 58 58"><rect width="58" height="58" rx="13" fill="#dfe6ee"/><path d="M13 0h24c-5 13-7 24-8 36h-4v22H13C6 58 0 52 0 45V13C0 6 6 0 13 0z" fill="#3d8ef2"/><path d="M16 16v9M41 16v9M29 4c-4 12-6 22-6 33h6" fill="none" stroke="#16304f" stroke-width="2.400"/><path d="M9 40c11 9 29 9 40 0" fill="none" stroke="#16304f" stroke-width="2.400"/></svg></div>
    <div class="dk"><svg viewBox="0 0 58 58"><rect width="58" height="58" rx="13" fill="#a9abae"/><rect x="10" y="8" width="11" height="11" rx="3" fill="#6fcf4f"/><rect x="24" y="8" width="11" height="11" rx="3" fill="#f4c21f"/><rect x="38" y="8" width="11" height="11" rx="3" fill="#ee9b2c"/><rect x="10" y="23" width="11" height="11" rx="3" fill="#d6342c"/><rect x="24" y="23" width="11" height="11" rx="3" fill="#8a8c90"/><rect x="38" y="23" width="11" height="11" rx="3" fill="#e2476a"/><rect x="10" y="38" width="11" height="11" rx="3" fill="#a24de0"/><rect x="24" y="38" width="11" height="11" rx="3" fill="#4aa6f0"/><rect x="38" y="38" width="11" height="11" rx="3" fill="#59d1a8"/></svg></div>
    <div class="dk run"><svg viewBox="0 0 58 58"><rect width="58" height="58" rx="13" fill="#fff"/><circle cx="29" cy="29" r="25" fill="#3b96ee"/><path d="M44 12L25 26l8 7z" fill="#e8443a"/><path d="M14 46l11-20 8 7z" fill="#f2f2f2"/></svg></div>
    <div class="dk run"><svg viewBox="0 0 58 58"><rect width="58" height="58" rx="13" fill="#f5f5f5"/><path d="M29 4a25 25 0 0 1 22 13H29a12 12 0 0 0-11 7L9 14A25 25 0 0 1 29 4z" fill="#dd4b3a"/><path d="M51 17a25 25 0 0 1-22 37l11-19a12 12 0 0 0-1-18z" fill="#f4bd32"/><path d="M9 14a25 25 0 0 0 20 40l11-19a12 12 0 0 1-22-11z" fill="#399f55"/><circle cx="29" cy="29" r="12" fill="#fff"/><circle cx="29" cy="29" r="9.500" fill="#4a86e8"/></svg></div>
    <div class="dk"><svg viewBox="0 0 58 58"><rect width="58" height="58" rx="13" fill="#fff"/><path d="M5 29C5 14 16 5 29 5c13 0 24 10 24 22 0 9-8 12-14 10-4-2-5-6-1-9-6-9-24-6-24 7 0 9 9 17 18 18a24 24 0 0 1-27-24z" fill="#1a77c4"/><path d="M53 27C53 14 42 5 29 5 20 5 10 11 7 21c6-9 17-11 25-6 5 3 7 8 6 13-4 3-3 7 1 9 6 2 14-1 14-10z" fill="#3ec6a6"/></svg></div>
    <div class="dk"><svg viewBox="0 0 58 58"><rect width="58" height="58" rx="13" fill="#eef2ea"/><path d="M0 13C0 6 6 0 13 0h9v26H0z" fill="#8ae06a"/><path d="M40 0h5c7 0 13 6 13 13v10L40 12z" fill="#d4d6d2"/><path d="M0 34l24 0-10 24c-7 0-14-6-14-13z" fill="#ef8fc8"/><path d="M36 38h22v7c0 7-6 13-13 13h-1z" fill="#f8dc5c"/><rect x="23" y="0" width="12" height="58" fill="#2d78e6"/><circle cx="29" cy="34" r="12" fill="#fff"/><path d="M29 24l8 18-8-4-8 4z" fill="#2d78e6"/></svg></div>
    <div class="dk"><svg viewBox="0 0 58 58"><rect width="58" height="58" rx="13" fill="#fff"/><g opacity=".85"><ellipse cx="29" cy="14" rx="7" ry="11" fill="#f4b93d"/><ellipse cx="40" cy="19" rx="7" ry="11" fill="#c6d44e" transform="rotate(45 40 19)"/><ellipse cx="44" cy="29" rx="11" ry="7" fill="#7cc374"/><ellipse cx="40" cy="40" rx="7" ry="11" fill="#66b8c0" transform="rotate(-45 40 40)"/><ellipse cx="29" cy="44" rx="7" ry="11" fill="#5a93d8"/><ellipse cx="18" cy="40" rx="7" ry="11" fill="#8c7ac8" transform="rotate(45 18 40)"/><ellipse cx="14" cy="29" rx="11" ry="7" fill="#c86aa8"/><ellipse cx="18" cy="18" rx="7" ry="11" fill="#e8684a" transform="rotate(-45 18 18)"/></g></svg></div>
    <div class="dk"><svg viewBox="0 0 58 58"><rect width="58" height="58" rx="13" fill="#5fcc55"/><rect x="9" y="18" width="27" height="24" rx="6" fill="#eef6ea"/><path d="M38 27l12-9v24l-12-9z" fill="#eef6ea"/></svg></div>
    <div class="dk"><svg viewBox="0 0 58 58"><rect width="58" height="58" rx="13" fill="#fff"/><path d="M0 15V13C0 6 6 0 13 0h32c7 0 13 6 13 13v2z" fill="#e8564c"/><text class="dk-apr" x="29" y="12">APR</text><text class="dk-day" x="29" y="48">19</text></svg></div>
    <div class="dk"><svg viewBox="0 0 58 58"><rect width="58" height="58" rx="13" fill="#fff"/><circle cx="11" cy="14" r="5" fill="#3577e8"/><circle cx="11" cy="30" r="5" fill="#e8463c"/><circle cx="11" cy="46" r="5" fill="#f09a28"/><path d="M21 14h28M21 30h28M21 46h28" stroke="#c0c0c0" stroke-width="1.500"/></svg><b class="badge">1</b></div>
    <div class="dk run"><svg viewBox="0 0 58 58"><rect width="58" height="58" rx="13" fill="#ecebe6"/><path d="M0 14V13C0 6 6 0 13 0h32c7 0 13 6 13 13v1z" fill="#fad54a"/><rect y="14" width="58" height="4" fill="#c9b96a"/><path d="M0 30h58M0 44h58" stroke="#d8d7d2"/></svg></div>
    <div class="dk"><svg viewBox="0 0 58 58"><rect width="58" height="58" rx="13" fill="#fff"/><circle cx="24" cy="37" r="17" fill="#f0785c"/><rect x="23" y="7" width="28" height="36" rx="4" fill="#66d5f5" opacity=".9"/><path d="M10 40c5-18 10-18 11-5 2-12 7-12 8-2 3-8 6-8 9-3l6-4" fill="none" stroke="#123a78" stroke-width="2.400"/></svg></div>
    <div class="dk"><svg viewBox="0 0 58 58"><rect width="58" height="58" rx="13" fill="#2f77e4"/><path d="M12 50c-4-4-2-10 2-10l3-10 2-16 7 6h7l8-8v18l3 20z" fill="#f1f6fd"/><circle cx="26" cy="28" r="1.500" fill="#16304f"/><circle cx="36" cy="28" r="1.500" fill="#16304f"/></svg></div>
    <div class="dk"><svg viewBox="0 0 58 58"><rect width="58" height="58" rx="13" fill="#f7f3ee"/><circle cx="30" cy="29" r="14" fill="#5aa6c4"/><path d="M9 49c8-3 30-26 39-38" fill="none" stroke="#111" stroke-width="2"/></svg></div>
    <div class="dk"><svg viewBox="0 0 58 58"><rect width="58" height="58" rx="13" fill="#ea4a59"/><path d="M25 42V14l17-4v24" fill="none" stroke="#fff" stroke-width="3.600"/><ellipse cx="19" cy="43" rx="6.500" ry="5.500" fill="#fff"/><ellipse cx="36" cy="37" rx="6.500" ry="5.500" fill="#fff"/></svg></div>
    <div class="dk"><svg viewBox="0 0 58 58"><rect width="58" height="58" rx="13" fill="#8d42d2"/><g fill="none" stroke="#fff" stroke-width="3"><path d="M16 40a19 19 0 1 1 26 0"/><path d="M21 33a11 11 0 1 1 16 0"/></g><circle cx="29" cy="25" r="5" fill="#fff"/><path d="M25 33h8l-1 20h-6z" fill="#fff"/></svg></div>
    <div class="dk"><svg viewBox="0 0 58 58"><rect width="58" height="58" rx="13" fill="#ee5f90"/><rect x="6" y="14" width="46" height="34" rx="6" fill="#f27ba2"/><text class="dk-bili" x="29" y="38">bilibili</text></svg></div>
    <div class="dk"><svg viewBox="0 0 58 58"><rect width="58" height="58" rx="13" fill="#ea3b3b"/><path d="M33 8c-3 1-6 4-5 8 1 3 7 2 8 8 1 7-9 10-12 5-3-5 3-9 6-7M26 15c-10 2-15 10-12 18 3 9 15 12 23 7 9-6 7-16 2-20" fill="none" stroke="#fff" stroke-width="3.600"/></svg></div>
    <div class="dk"><svg viewBox="0 0 58 58"><path d="M7 18h44l-3 38H10z" fill="#c4a272"/><path d="M14 4l6 20M18 2l4 22" stroke="#c33" stroke-width="1.500"/><path d="M26 8l24-4 2 22-26 2z" fill="#111"/><path d="M29 28l8 10-14 3z" fill="none" stroke="#8a6d44" stroke-width="4"/></svg></div>
    <div class="dk"><svg viewBox="0 0 58 58"><rect width="58" height="58" rx="13" fill="#c3c6ca"/><circle cx="29" cy="29" r="23" fill="#3b3c40"/><circle cx="29" cy="29" r="17" fill="none" stroke="#9fa2a6" stroke-width="5"/><path d="M29 29l-11-9M29 29l13-7M29 29v14" stroke="#9fa2a6" stroke-width="4"/></svg></div>
    <div class="dk run"><svg viewBox="0 0 58 58"><rect width="58" height="58" rx="13" fill="#3f8fdd"/><text class="dk-aa" x="25" y="37">Aa</text><circle cx="28" cy="29" r="17" fill="none" stroke="#cfe4f7" stroke-width="1.500"/><path d="M40 41l11 14" stroke="#111" stroke-width="4"/></svg></div>
    <i class="dock-sep"></i>
    <div class="dk run"><svg viewBox="0 0 58 58"><rect width="58" height="58" rx="13" fill="#565454"/><circle cx="29" cy="38" r="17" fill="#e2e0d8"/><circle cx="29" cy="35" r="12" fill="#f2b73a"/><circle cx="29" cy="32" r="9" fill="#de5b22"/><path d="M32 20V12l14-8" fill="none" stroke="#cfcfcf" stroke-width="3"/></svg></div>
    <div class="dk run"><svg viewBox="0 0 58 58"><rect width="58" height="58" rx="13" fill="#222225"/><path d="M27 10l20 19-20 19z" fill="#3aa3f2"/><path d="M17 22v14M22 18v22" stroke="#5e37e0" stroke-width="3"/></svg></div>
    <div class="dk run"><svg viewBox="0 0 58 58"><rect width="58" height="58" rx="13" fill="#fff"/><g stroke-width="9" stroke-linecap="round"><path d="M25 15h-9" stroke="#36c5f0"/><path d="M38 22V11" stroke="#2eb67d"/><path d="M25 27H13" stroke="#36c5f0"/><path d="M33 35h12" stroke="#ecb22e"/><path d="M20 38v9" stroke="#e01e5a"/><path d="M36 46v1" stroke="#ecb22e"/></g></svg></div>
    <div class="dk run"><svg viewBox="0 0 58 58"><rect width="58" height="58" rx="13" fill="#fff"/><path d="M32 4L16 24l4 24 16 6 6-22z" fill="#7d68d0"/><path d="M32 4l10 28-6 22-4-24z" fill="#4a3aa8"/></svg></div>
    <div class="dk run"><svg viewBox="0 0 58 58"><rect width="58" height="58" rx="13" fill="#2d66e8"/><path d="M36 10l11 8-22 30-12 3 2-13z" fill="#f5b342"/><path d="M33 12c3-7 14-3 16 6l-5 6-11-8z" fill="#c8c8cc"/><path d="M13 51l2-13 10 10z" fill="#111"/></svg></div>
    <div class="dk run"><svg viewBox="0 0 58 58"><rect width="58" height="58" rx="13" fill="#fff"/><path d="M16 2h26v20H16z" fill="#eee" stroke="#111" stroke-width="2"/><path d="M21 8h16M21 14h16" stroke="#111" stroke-width="2"/><path d="M5 24h48v26H5z" fill="#111"/><g fill="#fff"><circle cx="14" cy="30" r="2.600"/><circle cx="24" cy="30" r="2.600"/><circle cx="34" cy="30" r="2.600"/><circle cx="44" cy="30" r="2.600"/><circle cx="14" cy="38" r="2.600"/><circle cx="24" cy="38" r="2.600"/><circle cx="34" cy="38" r="2.600"/><circle cx="44" cy="38" r="2.600"/><rect x="18" y="44" width="22" height="3"/></g></svg></div>
    <div class="dk run"><svg viewBox="0 0 58 58"><rect width="58" height="58" rx="13" fill="#f8f8f8"/><path d="M10 18h26M10 26h26M10 34h20" stroke="#5fc4f0" stroke-width="2.400"/><path d="M10 46l5-4 5 5 5-5" fill="none" stroke="#5fc4f0" stroke-width="2"/><path d="M50 2l6 5-18 40-6 3 1-9z" fill="#222"/></svg></div>
    <div class="dk run"><svg viewBox="0 0 58 58"><path d="M6 10L38 1l18 12v38L19 56 2 40z" fill="#fff" stroke="#000" stroke-width="3"/><path d="M6 11l15 10 35-7M21 21v34" fill="none" stroke="#000" stroke-width="3"/><text class="dk-n" x="38" y="47">N</text></svg></div>
    <i class="dock-sep dock-sep2"></i>
    <div class="dk dk-wide"><svg viewBox="0 0 68 68"><path d="M6 0h46l14 14v54H6z" fill="#eef1f4"/><path d="M52 0l14 14H52z" fill="#5fb4ea"/><path d="M16 20h18l8 8v30H16z" fill="#dcdfe2"/><rect x="6" y="32" width="42" height="36" rx="8" fill="#3f8fdd"/><text class="dk-aa2" x="26" y="58">Aa</text></svg></div>
    <div class="dk dk-wide"><svg viewBox="0 0 68 68"><rect x="2" y="10" width="64" height="40" fill="#342725"/><path d="M2 10h64v4H2z" fill="#4a4342"/><rect x="46" y="38" width="20" height="30" rx="4" fill="#4d97ea"/><rect x="56" y="38" width="10" height="30" fill="#dfe6ee"/></svg></div>
    <div class="dk dk-wide"><svg viewBox="0 0 68 68"><rect x="2" y="2" width="62" height="58" fill="#1f1f1f"/><path d="M2 2h62v5H2z" fill="#3d3d3d"/><rect x="44" y="34" width="20" height="32" rx="4" fill="#fff"/><path d="M54 38l-6 8 2 12 5 2 4-10z" fill="#4a3aa8"/></svg></div>
    <div class="dk dk-wide"><svg viewBox="0 0 68 68"><path d="M6 4c12-5 44-5 56 0l-6 58c-5 5-39 5-44 0z" fill="#77787a"/><path d="M6 4c12 5 44 5 56 0" fill="none" stroke="#b6b8ba" stroke-width="3"/><path d="M18 4l8-6 6 8zM36 5l8-8 8 7z" fill="#c8cacc"/></svg></div>
</footer>
</body>
</html>
```

FILE: styles.css
```css
*{
    margin: 0;
    padding: 0;
    box-sizing: border-box;
}
body{
    position: relative;
    width: 2704px;
    height: 1756px;
    overflow: hidden;
    font-family: Inter, "Noto Sans CJK SC", sans-serif;
    background: linear-gradient(90deg, #06121f 0, #0c1624 780px, #3a1322 790px, #4a1a2a 1250px, #cfc6a5 1256px, #cfc6a5 2640px, #6e2417 2641px);
}
i{
    font-style: normal;
}
.defs{
    position: absolute;
}
.ic-letter{
    fill: #000;
    font-family: "Liberation Serif", serif;
    font-size: 20px;
    font-weight: 700;
    text-anchor: middle;
}

/* menu bar */
.menubar{
    display: flex;
    align-items: center;
    height: 68px;
    padding: 0 35px 0 37px;
    color: #fff;
    font-size: 25.5px;
    font-weight: 500;
    background: linear-gradient(90deg, #4d3428 0, #6b3c24 600px, #863d1f 1300px, #6a2f22 1900px, #3f2226 2704px);
}
.apple{
    width: 34px;
    height: 36px;
    margin-top: -6px;
}
.menu{
    display: flex;
    gap: 29.500px;
    margin-left: 25px;
}
.menu b{
    font-weight: 700;
    font-size: 26.500px;
}
.status{
    display: flex;
    align-items: center;
    margin-left: auto;
}
.st-dots{ width: 34px; height: 10px; }
.st-wifi{ width: 34px; height: 26px; margin-left: 37px; }
.st-pct{ margin-left: 37px; font-size: 22px; }
.st-batt{ width: 50px; height: 28px; margin-left: 10px; }
.st-input{
    width: 43px;
    height: 32px;
    margin-left: 41px;
    border-radius: 4px;
    background: #f7f5f4;
    color: #3a2a26;
    font-weight: 700;
    font-size: 24px;
    line-height: 32px;
    text-align: center;
}
.st-cat{ width: 34px; height: 32px; margin-left: 39px; }
.st-speed{
    margin-left: 46px;
    font-size: 17px;
    line-height: 21px;
    text-align: right;
}
.st-toggle{ width: 30px; height: 32px; margin-left: 36px; }
.st-siri{ width: 28px; height: 28px; margin-left: 35px; }
.st-time{ margin-left: 30px; font-size: 26.200px; font-weight: 500; }

/* windows on the desktop */
.window{
    position: absolute;
    overflow: hidden;
    border-radius: 20px;
}

/* safari behind everything */
.safari{
    left: 0;
    top: 70px;
    width: 2701px;
    height: 1579px;
    background: #fff;
    border-top: 2px solid #6e6563;
}
.sf-toolbar{
    display: flex;
    align-items: center;
    height: 100px;
    background: #332a28;
}
.sf-url{
    display: flex;
    align-items: center;
    justify-content: flex-end;
    gap: 16px;
    width: 1897px;
    height: 56px;
    padding-right: 11px;
    border: 2px solid #4c4240;
    border-radius: 14px;
}
.sf-translate{ width: 40px; height: 36px; }
.sf-reload{ width: 24px; height: 30px; }
.sf-tools{
    display: flex;
    align-items: center;
    gap: 38px;
    margin-left: 508px;
}
.sf-tools svg{
    width: 36px;
    height: 36px;
}
.sf-favs{
    display: flex;
    align-items: center;
    justify-content: flex-end;
    gap: 31px;
    height: 48px;
    padding: 0 17px 8px 0;
    background: #332a28;
    color: #9a908d;
    font-size: 21.700px;
    border-bottom: 2px solid #161110;
}
.sf-favs small{
    margin-left: 4px;
    font-size: 20px;
}
.sf-more{
    width: 24px;
    height: 26px;
    margin-left: 102px;
}
.sf-page{
    position: relative;
    height: 1400px;
}
.sf-search{
    position: absolute;
    left: 1300px;
    top: 82px;
    width: 300px;
    height: 100px;
    border: 2px solid #e6e6e6;
    border-radius: 40px;
}
.sf-chip{
    position: absolute;
    left: 2158px;
    top: 100px;
    width: 150px;
    height: 60px;
    border: 2px solid #c9c9c9;
    border-radius: 4px;
}
.sf-logo i{
    position: absolute;
    top: 102px;
    width: 30px;
    height: 30px;
    border-radius: 50%;
    background: #2746c8;
    left: 2440px;
}
.sf-logo i + i{
    top: 90px;
    left: 2481px;
    width: 12px;
    height: 16px;
    background: #b8201a;
}

/* finder */
.finder{
    display: flex;
    left: 28px;
    top: 70px;
    width: 1458px;
    height: 1575px;
    background: #332a28;
    border: 2px solid #6a6260;
    border-bottom-width: 1px;
    box-shadow: 0 0 40px rgba(0, 0, 0, .35);
    overflow: hidden;
}
.side{
    width: 275px;
    flex: none;
    padding-top: 104px;
    border-right: 2px solid #171211;
    color: #6f6562;
    font-size: 26px;
}
.side h4{
    height: 37px;
    margin-top: 27px;
    padding-left: 31px;
    font-size: 21px;
    font-weight: 600;
    line-height: 38px;
    color: #6d6360;
}
.side h4:first-child{
    margin-top: 0;
}
.side-item{
    display: flex;
    align-items: center;
    height: 56px;
    padding-left: 29px;
    white-space: nowrap;
}
.side-item svg{
    width: 40px;
    height: 32px;
    margin-right: 9px;
    color: #315a8b;
}
.side-on{
    position: relative;
    margin: 0 20px 0 18px;
    padding-left: 11px;
    border-radius: 10px;
    background: #463c3a;
}
.side-cloud svg{ color: #3e6d76; }
.side-grey svg{ color: #574d4b; }
.tag{
    width: 20px;
    height: 20px;
    margin: 0 19px 0 10px;
    border: 2px solid #5c5250;
    border-radius: 50%;
}
.tag-purple{
    background: #7a4a86;
    border-color: #7a4a86;
}
.lights-grey{
    position: absolute;
    left: 38px;
    top: 38px;
    display: flex;
    gap: 16px;
}
.lights-grey i{
    width: 24px;
    height: 24px;
    border-radius: 50%;
    background: #5b514f;
}
.fmain{
    flex: 1;
    min-width: 0;
}
.ftools{
    display: flex;
    align-items: center;
    height: 102px;
    background: #332a28;
    border-bottom: 2px solid #171211;
}
.ftools svg{
    flex: none;
    height: 36px;
}
.ft-back{ width: 16px; margin-left: 47px; }
.ft-fwd{ width: 16px; margin-left: 56px; }
.ft-title{
    margin-left: 41px;
    font-size: 29.500px;
    font-weight: 600;
    color: #7f7572;
}
.ft-list{ width: 66px; margin-left: 182px; }
.ft-grid{ width: 36px; margin-left: 112px; }
.ftools .ft-chev{ width: 16px; height: 10px; margin-left: 16px; }
.ft-share{ width: 30px; margin-left: 45px; }
.ft-tag{ width: 38px; margin-left: 45px; }
.ft-more{ width: 26px; margin-left: 130px; }
.ft-search{ width: 34px; margin-left: 34px; }
.fhead{
    display: flex;
    align-items: center;
    height: 55px;
    background: #2b2220;
    border-bottom: 2px solid #463c3a;
    color: #8f8582;
    font-size: 21px;
    font-weight: 500;
}
.fhead span{
    height: 38px;
    line-height: 38px;
}
.fh-name{ width: 426px; padding-left: 88px; }
.fh-size{ width: 194px; padding-left: 15px; border-left: 2px solid #463c3a; }
.fh-kind{ width: 229px; padding-left: 15px; border-left: 2px solid #463c3a; }
.fhead .fh-date{ padding-left: 15px; border-left: 2px solid #463c3a; color: #d6d0cd; font-weight: 700; }
.frows{
    padding-top: 9px;
    background: #332a28;
}
.row{
    display: grid;
    grid-template-columns: 45px 43px 340px 181px 255px 1fr;
    align-items: center;
    height: 40px;
    background: #2b2220;
    color: #c4bebb;
    font-size: 26px;
    white-space: nowrap;
}
.row:nth-child(even){
    background: #352b29;
}
.row span{
    padding-top: 2px;
}
.row svg{
    width: 32px;
    height: 32px;
}
.row-sel{
    background: #4a4a4a;
    color: #b6b3b1;
}
.disc{
    padding-left: 25px;
    color: #c4bebb;
    font-size: 24px;
    font-weight: 600;
}
.r-size{ text-align: right; color: #a9a29f; font-variant-numeric: tabular-nums; }
.r-kind{ padding-left: 25px; color: #a9a29f; }
.r-date{ color: #a9a29f; }

/* chrome */
.chrome{
    display: flex;
    flex-direction: column;
    left: 411px;
    top: 328px;
    width: 2293px;
    height: 1324px;
    border-top: 2px solid #6a6a6c;
    border-radius: 20px 20px 0 14px;
    background: #000;
}
.tabstrip{
    display: flex;
    align-items: center;
    height: 82px;
    flex: none;
    padding-left: 188px;
    background: #202124;
}
.lights{
    position: absolute;
    left: 40px;
    top: 29px;
    display: flex;
    gap: 17px;
}
.lights i{
    width: 24px;
    height: 24px;
    border-radius: 50%;
}
.red{ background: #ee6a5f; }
.yellow{ background: #f5bf4f; }
.green{ background: #61c554; }
.tab{
    position: relative;
    display: flex;
    align-items: center;
    width: 206px;
    height: 68px;
    flex: none;
    margin-top: 14px;
    padding: 0 20px;
    color: #e8eaed;
    font-size: 24px;
}
.tab::after{
    content: "";
    position: absolute;
    right: 0;
    top: 15px;
    width: 2px;
    height: 40px;
    background: #5a5b5e;
}
.tab-nosep::after{
    display: none;
}
.tab-on{
    width: 212px;
    padding: 0 23px 0 26px;
    border-radius: 20px 20px 0 0;
    background: #35363a;
}
.tab-on::before, .tab-on::after{
    content: "";
    position: absolute;
    top: auto;
    bottom: 0;
    width: 12px;
    height: 12px;
    background: radial-gradient(circle at 0 0, transparent 12px, #35363a 12.500px);
}
.tab-on::before{
    left: -12px;
}
.tab-on::after{
    right: -12px;
    background: radial-gradient(circle at 100% 0, transparent 12px, #35363a 12.500px);
}
.tab-icon, .tab-xhs, .tab-oe{
    width: 30px;
    height: 32px;
    flex: none;
    margin-right: 20px;
}
.tab-on .tab-xhs{
    margin-right: 17px;
}
.tab-xhs{
    border-radius: 8px;
    background: #ef3d4d;
    color: #fff;
    font-size: 9px;
    font-weight: 700;
    line-height: 32px;
    text-align: center;
}
.tab-oe{
    background: #6b1418;
    color: #e8d7b0;
    font-family: "Liberation Serif", serif;
    font-size: 26px;
    line-height: 32px;
    text-align: center;
}
.tab-title{
    width: 96px;
    flex: none;
    white-space: nowrap;
    -webkit-mask-image: linear-gradient(90deg, #000 70px, transparent 90px);
    mask-image: linear-gradient(90deg, #000 70px, transparent 90px);
}
.tab-x{
    width: 20px;
    height: 20px;
    flex: none;
}
.tab-new{
    width: 26px;
    height: 26px;
    margin: 8px 0 0 31px;
}
.tab-list{
    width: 20px;
    height: 12px;
    margin: 6px 0 0 134px;
}
.toolbar{
    display: flex;
    align-items: center;
    height: 72px;
    flex: none;
    padding-left: 11px;
    background: #35363a;
}
.tb{
    width: 64px;
    height: 56px;
    border: 0;
    background: none;
}
.tb svg{
    width: 30px;
    height: 30px;
}
.omni{
    display: flex;
    align-items: center;
    width: 839px;
    height: 56px;
    margin-left: 12px;
    padding: 0 22px 0 27px;
    border-radius: 28px;
    background: #202124;
}
.omni-lock{ width: 18px; height: 24px; }
.omni-url{
    flex: 1;
    margin-left: 23px;
    color: #85868a;
    font-size: 27.500px;
    white-space: nowrap;
}
.omni-url b{
    color: #f1f3f4;
    font-weight: 400;
}
.omni-share{ width: 26px; height: 34px; margin-right: 36px; }
.omni-star{ width: 30px; height: 30px; }
.exts{
    display: flex;
    align-items: center;
    margin-left: 26px;
    gap: 32px;
}
.exts svg{
    width: 32px;
    height: 32px;
}
.avatar{
    width: 44px;
    height: 44px;
    margin: 0 -6px;
    border-radius: 50%;
    background: #6f9b46;
    color: #eef3e6;
    font-size: 22px;
    line-height: 44px;
    text-align: center;
}
.bmbar{
    display: flex;
    align-items: center;
    gap: 32px;
    height: 66px;
    flex: none;
    padding: 0 22px 8px 29px;
    background: #35363a;
    border-bottom: 2px solid #55565a;
    color: #e8eaed;
    font-size: 24px;
    white-space: nowrap;
}
.bm{
    display: flex;
    align-items: center;
    gap: 17px;
}
.bm-wide{
    gap: 20px;
}
.bm-tight{
    margin-right: -5px;
}
.bm svg{
    width: 32px;
    height: 32px;
}
.bm svg.bm-fold{
    width: 26px;
    height: 30px;
}
.bm-e{
    width: 32px;
    height: 32px;
    background: #cf3a24;
    color: #fff;
    font-family: "Liberation Serif", serif;
    font-size: 28px;
    line-height: 32px;
    text-align: center;
}
.bm-ud{
    width: 32px;
    height: 32px;
    background: #d9642c;
    color: #ffd93b;
    font-family: "Liberation Mono", monospace;
    font-size: 22px;
    font-weight: 700;
    line-height: 32px;
    text-align: center;
}
.bm-right{
    display: flex;
    align-items: center;
    gap: 20px;
    margin-left: auto;
}
.bm-more{
    font-size: 26px;
    margin-right: 2px;
}
.bm-sep{
    width: 2px;
    height: 32px;
    background: #5a5b5e;
}
.stage{
    position: relative;
    display: flex;
    justify-content: center;
    flex: 1;
    min-height: 0;
    background: #000;
}
.photo{
    width: 982px;
    background: linear-gradient(180deg, #f8f7ee 0, #f8f7ee 1020px, #dfdfd6 100%);
}
.pager{
    position: absolute;
    right: 56px;
    top: 46px;
    width: 70px;
    height: 52px;
    border-radius: 20px;
    background: #1f1f1f;
    color: #e8e8e8;
    font-size: 24px;
    line-height: 52px;
    text-align: center;
}
.arrow{
    position: absolute;
    top: 515px;
    width: 72px;
    height: 72px;
    border: 0;
    border-radius: 50%;
    background: #fff;
}
.arrow svg{
    width: 20px;
    height: 30px;
}
.arrow-prev{ left: 38px; }
.arrow-next{ right: 40px; }

/* mind map inside the photo */
.mindmap{
    position: relative;
    height: 100%;
    font-family: "Noto Sans", "Noto Sans CJK SC", sans-serif;
    filter: blur(.5px);
    text-spacing-trim: space-all;
}
.links{
    position: absolute;
    left: 0;
    top: 0;
    width: 982px;
    height: 1102px;
}
.links path{
    fill: none;
    stroke: #5f8f8a;
    stroke-width: 1.6;
}
.node{
    position: absolute;
    padding-left: 4px;
    border-radius: 5px;
    background: #cbdcd5;
    color: #4f8078;
    font-size: 20.400px;
    line-height: 33px;
    white-space: nowrap;
}
.n-cons, .n-ster, .n-fl, .n-w8, .n-w10{
    padding-top: 3px;
    line-height: 27px;
}
.b{
    color: #2e6b66;
    font-weight: 700;
}
.tri{
    font-size: 18px;
}
.root{
    background: #f5c4ae;
    color: #3f6f68;
    font-weight: 700;
    font-size: 21px;
    line-height: 40px;
}
.n-root{ left: 14px; top: 582px; width: 54px; height: 40px; }
.n-adj{ left: 83px; top: 341px; width: 42px; height: 33px; }
.n-syn{ left: 83px; top: 831px; width: 68px; height: 32px; }
.n-mid{ left: 141px; top: 204px; width: 47px; height: 32px; }
.n-high{ left: 141px; top: 478px; width: 47px; height: 33px; }
.n-l2{ left: 203px; width: 234px; height: 33px; }
.n-cons{ top: 44px; height: 87px; }
.n-ster{ top: 146px; height: 87px; }
.n-rigid{ top: 269px; }
.n-fixed{ top: 337px; }
.n-infl{ top: 389px; }
.n-die{ top: 440px; }
.n-wrong{ top: 478px; }
.n-hide{ top: 517px; }
.n-ossi{ top: 555px; }
.n-star{ top: 593px; }
.n-l3{ left: 452px; width: 421px; }
.n-c1{ top: 32px; height: 34px; }
.n-c2{ top: 71px; height: 33px; }
.n-c3{ top: 110px; height: 32px; }
.n-st{ top: 173px; height: 34px; }
.n-ri{ top: 238px; height: 93px; padding-top: 3px; font-size: 21.500px; line-height: 29px; }
.n-fl{ top: 375px; height: 60px; }
.n-gu{ left: 452px; top: 440px; width: 105px; height: 33px; }
.n-g{ left: 167px; width: 128px; height: 33px; }
.n-g1{ top: 669px; }
.n-g2{ top: 787px; }
.n-g3{ top: 889px; }
.n-g4{ top: 992px; }
.n-w{ left: 311px; width: 318px; height: 33px; }
.n-w1{ top: 631px; }
.n-w2{ top: 669px; height: 34px; }
.n-w3{ top: 708px; height: 35px; }
.n-w4{ top: 748px; }
.n-w5{ top: 787px; height: 32px; }
.n-w6{ top: 824px; }
.n-w7{ top: 863px; }
.n-w8{ top: 901px; height: 60px; }
.n-w9{ top: 966px; }
.n-w10{ top: 1004px; height: 60px; }
.mark{
    position: absolute;
    left: 452px;
    top: 534px;
    color: rgba(255, 255, 255, .8);
    font-size: 26px;
    font-weight: 700;
}
.page-dot{
    position: absolute;
    left: 486px;
    top: 1064px;
    width: 10px;
    height: 10px;
    border-radius: 50%;
    background: #fff;
}

/* dock */
.dock{
    position: absolute;
    left: 59px;
    top: 1652px;
    display: flex;
    width: 2584px;
    height: 93px;
    padding: 13px 0 0 3px;
    border: 2px solid rgba(130, 125, 120, .55);
    border-radius: 26px;
    background: linear-gradient(90deg, #15181f 0, #2a1a20 500px, #421d1c 1000px, #5a4a36 1250px, #625642 1500px, #625642 100%);
}
.dk{
    position: relative;
    width: 75.94px;
    height: 58px;
    flex: none;
    text-align: center;
}
.dk svg{
    width: 57px;
    height: 58px;
}
.dk.run::after{
    content: "";
    position: absolute;
    left: 35px;
    top: 67px;
    width: 6px;
    height: 7px;
    border-radius: 50%;
    background: #d9cdbd;
}
.dk-wide{
    margin-top: -4px;
}
.dk-wide svg{
    width: 68px;
    height: 68px;
}
.dock-sep{
    width: 33px;
    flex: none;
    position: relative;
}
.dock-sep::after{
    content: "";
    position: absolute;
    left: 16px;
    top: -4px;
    width: 2px;
    height: 70px;
    background: #978d7b;
}
.dock-sep2{
    width: 36px;
}
.badge{
    position: absolute;
    left: 46px;
    top: -8px;
    width: 26px;
    height: 26px;
    border-radius: 50%;
    background: #e8463c;
    color: #fff;
    font-size: 15px;
    font-weight: 500;
    line-height: 26px;
}
.dk-apr{
    fill: #fff;
    font-size: 11px;
    font-weight: 600;
    text-anchor: middle;
}
.dk-day{
    fill: #222;
    font-size: 32px;
    font-weight: 300;
    text-anchor: middle;
}
.dk-bili{
    fill: #fff;
    font-size: 14px;
    font-weight: 700;
    text-anchor: middle;
}
.dk-aa{
    fill: #fff;
    font-family: "Liberation Serif", serif;
    font-size: 26px;
    text-anchor: middle;
}
.dk-aa2{
    fill: #fff;
    font-family: "Liberation Serif", serif;
    font-size: 24px;
    text-anchor: middle;
}
.dk-n{
    fill: #000;
    font-family: "Liberation Serif", serif;
    font-size: 32px;
    font-weight: 700;
    text-anchor: middle;
}
```
